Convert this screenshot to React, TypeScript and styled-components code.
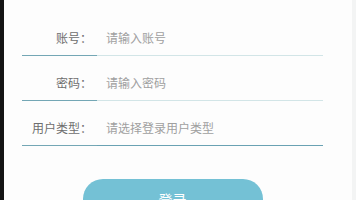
import styled, { createGlobalStyle } from 'styled-components';

const GlobalStyle = createGlobalStyle`
  html, body {
    margin: 0;
    padding: 0;
    background: #fdfdfd;
    font-family: "Noto Sans CJK SC", "Noto Sans", sans-serif;
  }
`;

const fields = [
  { label: '账号：', placeholder: '请输入账号', type: 'text', active: false },
  { label: '密码：', placeholder: '请输入密码', type: 'password', active: false },
  { label: '用户类型：', placeholder: '请选择登录用户类型', type: 'text', active: true },
];

const App = () => {
  return (
    <>
      <GlobalStyle />
      <Screen>
        <EdgeLeft />
        <Main>
          <Form>
            {fields.map((f) => (
              <Row key={f.label}>
                <Label>{f.label}</Label>
                <Input type={f.type} placeholder={f.placeholder} $active={f.active} />
              </Row>
            ))}
            <ButtonWrap>
              <LoginButton type="button">登录</LoginButton>
            </ButtonWrap>
          </Form>
        </Main>
        <EdgeRight />
      </Screen>
    </>
  );
};

export default App;

const Screen = styled.div`
  display: flex;
  width: 356px;
  height: 200px;
  overflow: hidden;
`;

const EdgeLeft = styled.div`
  width: 4px;
  background: #141414;
`;

const EdgeRight = styled.div`
  width: 4px;
  background: #f3f4f4;
`;

const Main = styled.div`
  flex: 1;
  padding: 20px 29px 0 18px;
`;

const Form = styled.div`
  display: flex;
  flex-direction: column;
  gap: 9px;
`;

const Row = styled.div`
  display: flex;
  height: 36px;
`;

const Label = styled.div`
  width: 75px;
  box-sizing: border-box;
  padding-right: 5px;
  display: flex;
  align-items: center;
  justify-content: flex-end;
  font-size: 12px;
  color: #6e6e6e;
  border-bottom: 1px solid #74a7b5;
`;

const Input = styled.input<{ $active: boolean }>`
  flex: 1;
  min-width: 0;
  box-sizing: border-box;
  border: none;
  border-bottom: 1px solid ${(p) => (p.$active ? '#6aa2b3' : '#d2e5e7')};
  background: transparent;
  outline: none;
  padding: 0 0 0 9px;
  font-family: inherit;
  font-size: 12px;
  color: #333;

  &::placeholder {
    color: #a0a0a0;
  }
`;

const ButtonWrap = styled.div`
  display: flex;
  justify-content: center;
  margin-top: 24px;
`;

const LoginButton = styled.button`
  width: 180px;
  height: 40px;
  border: none;
  border-radius: 20px;
  background: #74c1d5;
  color: #fff;
  font-family: inherit;
  font-size: 14px;
  cursor: pointer;
`;
